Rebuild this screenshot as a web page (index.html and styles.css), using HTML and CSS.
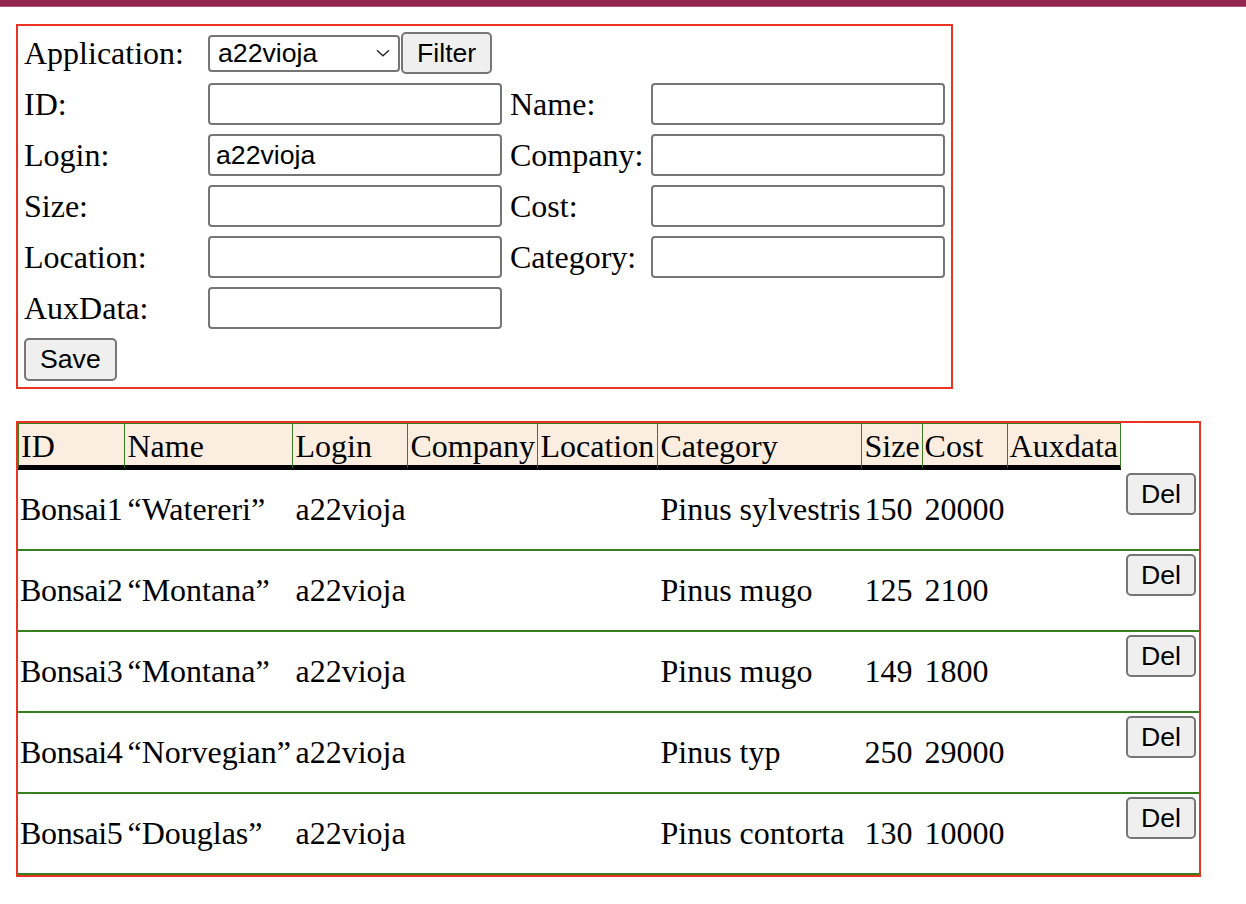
FILE: index.html
```html
<!DOCTYPE html>
<html>
<head>
<meta charset="utf-8">
<title>Bonsai</title>
<link rel="stylesheet" href="styles.css">
</head>
<body>
<div class="topbar"></div>
<main class="page">
  <form class="editor">
    <label class="lbl">Application:</label>
    <div class="appctl">
      <span class="select-wrap">
        <select class="sel"><option>a22vioja</option></select>
        <svg class="chev" width="14" height="8" viewBox="0 0 14 8"><path d="M1 1.2 L7 6.8 L13 1.2" fill="none" stroke="#222" stroke-width="1.3"/></svg>
      </span>
      <button type="button" class="btn">Filter</button>
    </div>
    <div class="empty"></div>
    <div class="empty"></div>

    <label class="lbl">ID:</label>
    <input class="txt" type="text">
    <label class="lbl">Name:</label>
    <input class="txt" type="text">

    <label class="lbl">Login:</label>
    <input class="txt" type="text" value="a22vioja">
    <label class="lbl">Company:</label>
    <input class="txt" type="text">

    <label class="lbl">Size:</label>
    <input class="txt" type="text">
    <label class="lbl">Cost:</label>
    <input class="txt" type="text">

    <label class="lbl">Location:</label>
    <input class="txt" type="text">
    <label class="lbl">Category:</label>
    <input class="txt" type="text">

    <label class="lbl">AuxData:</label>
    <input class="txt" type="text">
    <div class="empty"></div>
    <div class="empty"></div>

    <div class="save-cell"><button type="button" class="btn">Save</button></div>
  </form>

  <table class="grid">
    <colgroup>
      <col class="c-id"><col class="c-name"><col class="c-login"><col class="c-company"><col class="c-location"><col class="c-category"><col class="c-size"><col class="c-cost"><col class="c-aux"><col class="c-del">
    </colgroup>
    <thead>
      <tr>
        <th>ID</th><th>Name</th><th>Login</th><th>Company</th><th>Location</th><th>Category</th><th>Size</th><th>Cost</th><th class="last">Auxdata</th>
      </tr>
    </thead>
    <tbody>
      <tr><td class="idc">Bonsai1</td><td>“Watereri”</td><td>a22vioja</td><td></td><td></td><td>Pinus sylvestris</td><td>150</td><td>20000</td><td></td><td class="del"><div class="delform"><button type="button" class="btn btn-del">Del</button></div></td></tr>
      <tr><td class="idc">Bonsai2</td><td>“Montana”</td><td>a22vioja</td><td></td><td></td><td>Pinus mugo</td><td>125</td><td>2100</td><td></td><td class="del"><div class="delform"><button type="button" class="btn btn-del">Del</button></div></td></tr>
      <tr><td class="idc">Bonsai3</td><td>“Montana”</td><td>a22vioja</td><td></td><td></td><td>Pinus mugo</td><td>149</td><td>1800</td><td></td><td class="del"><div class="delform"><button type="button" class="btn btn-del">Del</button></div></td></tr>
      <tr><td class="idc">Bonsai4</td><td>“Norvegian”</td><td>a22vioja</td><td></td><td></td><td>Pinus typ</td><td>250</td><td>29000</td><td></td><td class="del"><div class="delform"><button type="button" class="btn btn-del">Del</button></div></td></tr>
      <tr><td class="idc">Bonsai5</td><td>“Douglas”</td><td>a22vioja</td><td></td><td></td><td>Pinus contorta</td><td>130</td><td>10000</td><td></td><td class="del"><div class="delform"><button type="button" class="btn btn-del">Del</button></div></td></tr>
    </tbody>
  </table>
</main>
</body>
</html>
```

FILE: styles.css
```css
html, body {
  margin: 0;
  padding: 0;
  background: #ffffff;
}

body {
  font-family: "Liberation Serif", "Times New Roman", serif;
  font-size: 32px;
  color: #000;
}

.topbar {
  height: 6px;
  background: #93264f;
  border-bottom: 1px solid #a9587c;
}

.page {
  padding: 17px 16px 0;
}

.editor {
  box-sizing: border-box;
  width: 937px;
  border: 2px solid #ea3323;
  padding: 6px;
  margin: 0 0 32px;
  display: grid;
  grid-template-columns: 176px 294px 133px 294px;
  grid-template-rows: repeat(6, 42px) 43px;
  column-gap: 8px;
  row-gap: 9px;
  align-items: center;
}

.lbl {
  white-space: nowrap;
  line-height: 37px;
}

.appctl {
  display: flex;
  align-items: center;
  gap: 1px;
}

.select-wrap {
  position: relative;
  display: inline-flex;
}

.sel {
  box-sizing: border-box;
  width: 192px;
  height: 37px;
  border: 2px solid #767676;
  border-radius: 4px;
  background: #fff;
  color: #000;
  font-family: "Liberation Sans", Arial, sans-serif;
  font-size: 26.67px;
  padding: 0 0 0 8px;
  -webkit-appearance: none;
  appearance: none;
  margin: 0;
}

.chev {
  position: absolute;
  right: 10px;
  top: 14px;
  pointer-events: none;
}

.txt {
  box-sizing: border-box;
  width: 294px;
  height: 42px;
  border: 2px solid #767676;
  border-radius: 4px;
  background: #fff;
  font-family: "Liberation Sans", Arial, sans-serif;
  font-size: 26.67px;
  color: #000;
  padding: 0 6px;
  margin: 0;
}

.btn {
  box-sizing: border-box;
  height: 42px;
  padding: 0 14px;
  border: 2px solid #767676;
  border-radius: 5px;
  background: #efefef;
  color: #000;
  font-family: "Liberation Sans", Arial, sans-serif;
  font-size: 26.67px;
  line-height: 1;
  margin: 0;
}

.btn-del {
  padding: 0 13px;
}

.save-cell .btn {
  height: 43px;
}

.grid {
  border: 2px solid #ea3323;
  border-collapse: separate;
  border-spacing: 0;
}

.c-id { width: 104px; }
.c-name { width: 168px; }
.c-login { width: 115px; }
.c-company { width: 130px; }
.c-location { width: 120px; }
.c-category { width: 204px; }
.c-size { width: 60px; }
.c-cost { width: 85px; }
.c-aux { width: 113px; }
.c-del { width: 76px; }

.grid th {
  font-weight: normal;
  text-align: left;
  white-space: nowrap;
  background: #fbeee0;
  border-top: 1px solid #377e22;
  border-left: 1px solid #377e22;
  border-bottom: 5px solid #000;
  padding: 4px 2px 0;
  line-height: 37px;
}

.grid th.last {
  border-right: 1px solid #377e22;
}

.grid td {
  white-space: nowrap;
  padding: 2px 1px 2px 3px;
  border-bottom: 2px solid #377e22;
  line-height: 37px;
  vertical-align: middle;
}

.grid td.idc {
  padding: 2px;
  letter-spacing: -0.35px;
}

.grid td.del {
  padding: 2px 3px 2px 5px;
}

.delform {
  margin: 1px 0 32px;
  display: flex;
}
```
